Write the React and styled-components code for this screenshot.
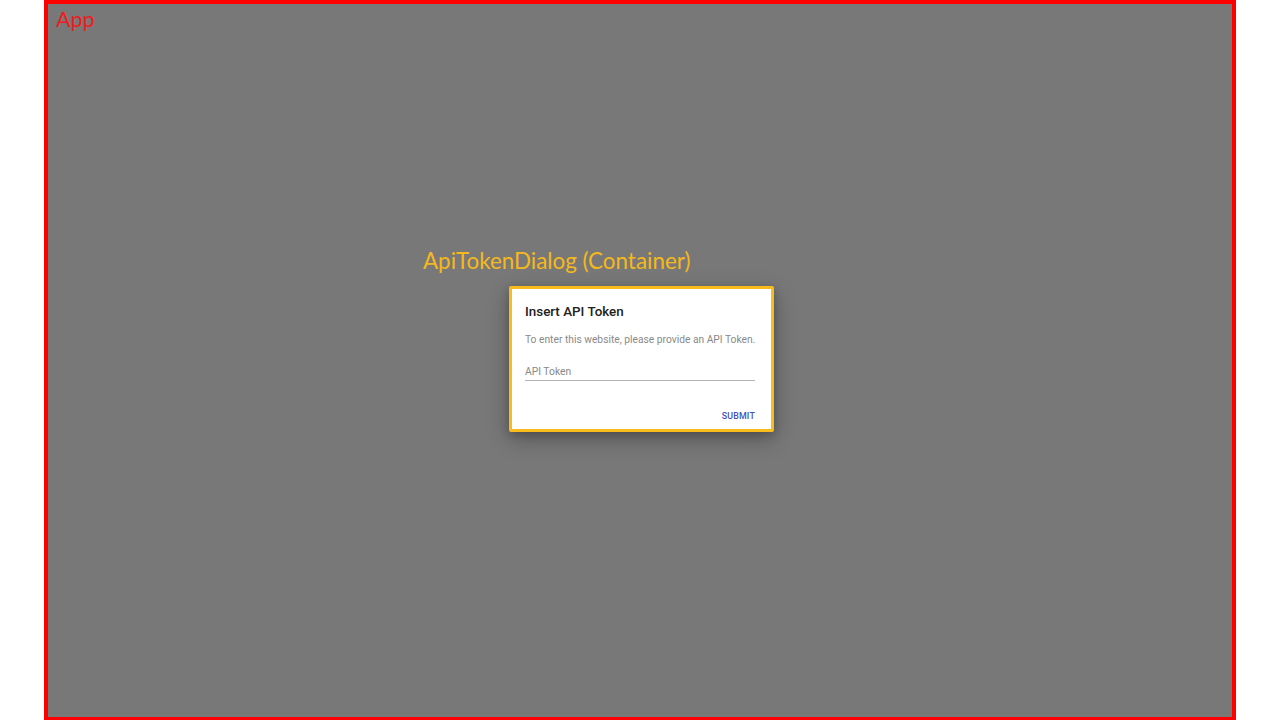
import React from "react";
import styled, { createGlobalStyle } from "styled-components";

const GlobalStyle = createGlobalStyle`
  html, body {
    margin: 0;
    padding: 0;
    background: #ffffff;
  }
  #root {
    width: 1280px;
    height: 720px;
  }
`;

const Page = styled.div`
  width: 1280px;
  height: 720px;
  display: flex;
  justify-content: center;
  overflow: hidden;
`;

const AppFrame = styled.div`
  position: relative;
  box-sizing: border-box;
  width: 1192px;
  height: 721px;
  border: 4px solid #ff0000;
  background: #787878;
  display: flex;
  align-items: center;
  justify-content: center;
`;

const Annotation = styled.span`
  position: absolute;
  font-family: Lato, "Open Sans", sans-serif;
  font-size: ${props => props.size}px;
  color: ${props => props.color};
  white-space: nowrap;
  line-height: 1;
`;

const AppLabel = styled(Annotation)`
  top: 5px;
  left: 8px;
`;

const DialogWrap = styled.div`
  position: relative;
  margin: 0 0 3px 3px;
`;

const DialogLabel = styled(Annotation)`
  bottom: calc(100% + 14px);
  left: -86px;
`;

const Dialog = styled.div`
  box-sizing: border-box;
  width: 265px;
  height: 146px;
  border: 3px solid #f8bc1c;
  background: #ffffff;
  border-radius: 2px;
  box-shadow: 0 7px 22px rgba(0, 0, 0, 0.28), 0 3px 8px rgba(0, 0, 0, 0.18);
  display: flex;
  flex-direction: column;
  font-family: Roboto, "Liberation Sans", sans-serif;
  padding: 0 16px 0 13px;
`;

const Title = styled.h2`
  margin: 14px 0 0;
  font-size: 13.4px;
  font-weight: 500;
  color: #212121;
  line-height: 18px;
`;

const Description = styled.p`
  margin: 12px 0 0;
  font-size: 10.25px;
  color: #8a8a8a;
  line-height: 14px;
  white-space: nowrap;
`;

const Field = styled.div`
  margin-top: 18px;
  border-bottom: 1px solid #b4b4b4;
  padding-bottom: 2px;
  font-size: 10.3px;
  color: #888888;
  line-height: 13px;
`;

const Actions = styled.div`
  margin-top: auto;
  margin-bottom: 8px;
  display: flex;
  justify-content: flex-end;
`;

const SubmitButton = styled.button`
  border: none;
  background: none;
  padding: 0;
  font-family: Roboto, "Liberation Sans", sans-serif;
  font-size: 8.8px;
  font-weight: 500;
  color: #3f51b5;
  letter-spacing: 0.2px;
  text-transform: uppercase;
`;

export default function App() {
  return (
    <>
      <GlobalStyle />
      <Page>
        <AppFrame>
          <AppLabel size={21.5} color="#ee1c1c">App</AppLabel>
          <DialogWrap>
            <DialogLabel size={22.4} color="#f5b81c">ApiTokenDialog (Container)</DialogLabel>
            <Dialog>
              <Title>Insert API Token</Title>
              <Description>To enter this website, please provide an API Token.</Description>
              <Field>API Token</Field>
              <Actions>
                <SubmitButton>Submit</SubmitButton>
              </Actions>
            </Dialog>
          </DialogWrap>
        </AppFrame>
      </Page>
    </>
  );
}
